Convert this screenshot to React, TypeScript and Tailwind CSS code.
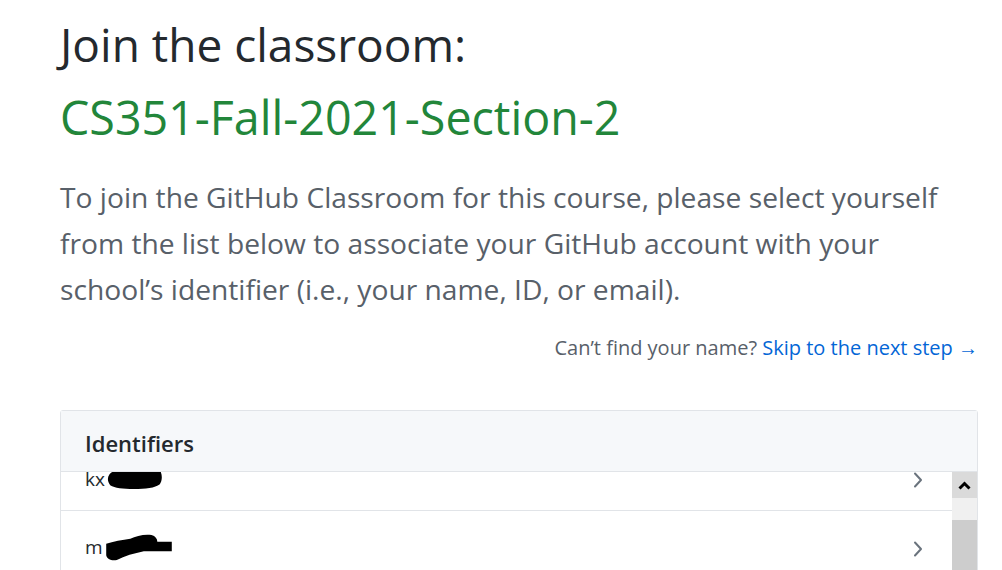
import React from "react";

const font = { fontFamily: '"Open Sans", "Noto Sans", sans-serif' };

function Chevron() {
  return (
    <svg width="10" height="16" viewBox="0 0 10 16" className="shrink-0">
      <path d="M2 1.5 L8 8 L2 14.5" fill="none" stroke="#6a737d" strokeWidth="2" strokeLinecap="round" strokeLinejoin="round" />
    </svg>
  );
}

function Blob1() {
  return (
    <svg width="58" height="21" viewBox="0 0 58 22" className="ml-[1px] mt-[3px]">
      <path d="M2 6 C4 2 12 1 22 1 C34 0 46 1 56 3 C58 8 57 13 55 16 C50 20 40 21 28 21 C16 21 8 20 3 17 C0 13 0 9 2 6 Z" fill="#000" />
    </svg>
  );
}

function Blob2() {
  return (
    <svg width="70" height="27" viewBox="0 0 70 28" className="ml-[1px]">
      <path d="M1 10 C8 8 18 6 26 5 C32 2 40 0 48 1 C52 2 54 5 54 8 L69 8 L69 18 L40 18 C30 20 20 23 12 27 C6 28 2 26 1 22 Z" fill="#000" />
    </svg>
  );
}

export default function App() {
  return (
    <div className="h-[570px] w-[1002px] overflow-hidden bg-white" style={font}>
      <div className="ml-[60px] w-[918px] pt-[16px]">
        <h1 className="text-[46px] leading-[56px] text-[#24292e] font-normal whitespace-nowrap">Join the classroom:</h1>
        <h2 className="mt-[17px] text-[46.6px] leading-[56px] text-[#22863a] font-normal whitespace-nowrap">CS351-Fall-2021-Section-2</h2>
        <p className="mt-[29px] text-[28.2px] leading-[46px] text-[#586069] whitespace-nowrap">
          To join the GitHub Classroom for this course, please select yourself
          <br />
          from the list below to associate your GitHub account with your
          <br />
          school’s identifier (i.e., your name, ID, or email).
        </p>
        <div className="mt-[22px] text-right text-[20px] leading-[28px] text-[#586069] whitespace-nowrap">
          Can’t find your name? <a className="text-[#0366d6]">Skip to the next step →</a>
        </div>
        <div className="mt-[48px] border border-[#e1e4e8] rounded-t-[3px]">
          <div className="h-[61px] bg-[#f6f8fa] border-b border-[#e1e4e8] pl-[24px] pt-[17px]">
            <span className="text-[22px] leading-[30px] font-semibold text-[#24292e]">Identifiers</span>
          </div>
          <div className="flex h-[200px]">
            <div className="flex-1 overflow-hidden">
              <div className="-mt-[30px]">
                <div className="h-[69px] border-b border-[#e1e4e8] flex items-start justify-between pl-[24px] pr-[29px] pt-[24px]">
                  <div className="flex items-start text-[19px] leading-[27px] text-[#24292e]">
                    <span>kx</span>
                    <Blob1 />
                  </div>
                  <div className="pt-[6px]"><Chevron /></div>
                </div>
                <div className="h-[69px] border-b border-[#e1e4e8] flex items-start justify-between pl-[24px] pr-[29px] pt-[23px]">
                  <div className="flex items-start text-[19px] leading-[27px] text-[#24292e]">
                    <span>m</span>
                    <Blob2 />
                  </div>
                  <div className="pt-[7px]"><Chevron /></div>
                </div>
                <div className="h-[69px] border-b border-[#e1e4e8]" />
              </div>
            </div>
            <div className="w-[25px] flex flex-col">
              <div className="h-[26px] bg-[#dadada] flex items-center justify-center">
                <svg width="13" height="9" viewBox="0 0 13 9">
                  <path d="M1.5 7.5 L6.5 2.5 L11.5 7.5" fill="none" stroke="#000" strokeWidth="3" strokeLinejoin="miter" />
                </svg>
              </div>
              <div className="h-[22px] bg-[#f0f0f0]" />
              <div className="flex-1 bg-[#cdcdcd]" />
            </div>
          </div>
        </div>
      </div>
    </div>
  );
}
